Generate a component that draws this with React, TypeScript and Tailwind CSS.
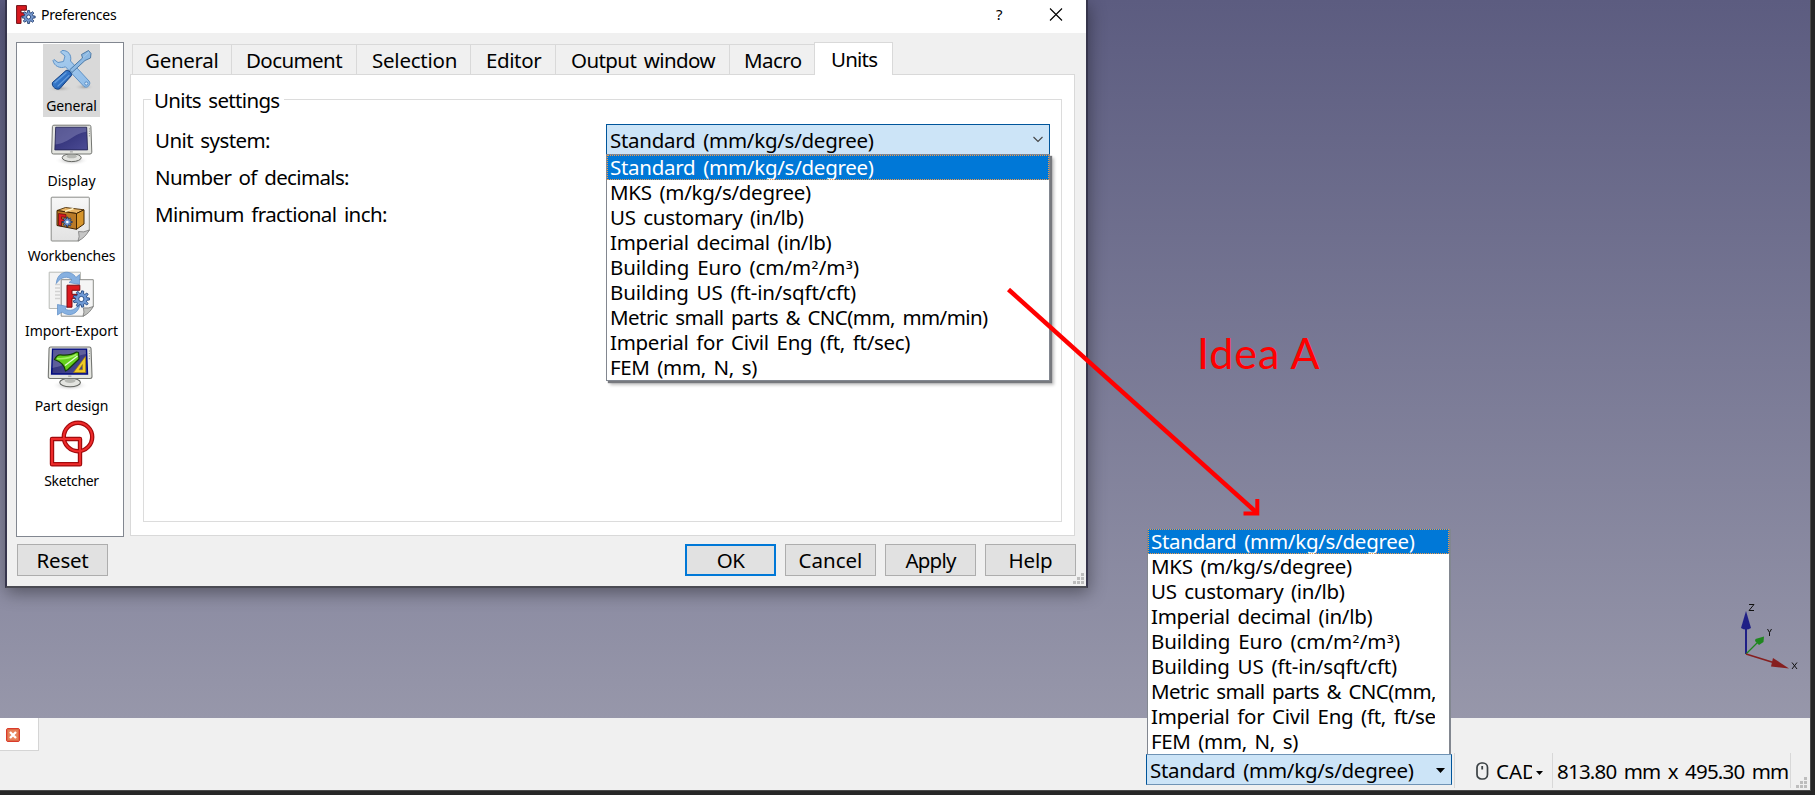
import React from 'react';

const TAHOMA = "font-['Noto_Sans',sans-serif] text-[20.5px] whitespace-pre text-black [word-spacing:2.700px]";

const unitSystems = [
  { label: 'Standard (mm/kg/s/degree)', cls: 'tracking-[-0.27px]' },
  { label: 'MKS (m/kg/s/degree)', cls: 'tracking-[-0.28px]' },
  { label: 'US customary (in/lb)', cls: 'tracking-[-0.31px]' },
  { label: 'Imperial decimal (in/lb)', cls: 'tracking-[-0.27px]' },
  { label: 'Building Euro (cm/m²/m³)', cls: 'tracking-[-0.06px]' },
  { label: 'Building US (ft-in/sqft/cft)', cls: 'tracking-[-0.13px]' },
  { label: 'Metric small parts & CNC(mm, mm/min)', cls: 'tracking-[-0.56px]' },
  { label: 'Imperial for Civil Eng (ft, ft/sec)', cls: 'tracking-[-0.29px]' },
  { label: 'FEM (mm, N, s)', cls: 'tracking-[-0.34px]' },
];

const tabs = [
  { label: 'General', cls: 'w-[99px] pl-[12px] tracking-[-0.28px]' },
  { label: 'Document', cls: 'w-[125px] pl-[14px] tracking-[-0.59px]' },
  { label: 'Selection', cls: 'w-[114px] pl-[15px] tracking-[-0.23px]' },
  { label: 'Editor', cls: 'w-[85px] pl-[15px] tracking-[-0.39px]' },
  { label: 'Output window', cls: 'w-[174px] pl-[15px] tracking-[-0.59px]' },
  { label: 'Macro', cls: 'w-[85px] pl-[14px] tracking-[-0.57px]' },
];

function gearPath(cx: number, cy: number, inner: number, outer: number, teeth: number) {
  const pts: string[] = [];
  const step = (Math.PI * 2) / teeth;
  for (let i = 0; i < teeth; i++) {
    const a = i * step;
    [[-0.3, inner], [-0.18, outer], [0.18, outer], [0.3, inner]].forEach(([k, r]) => {
      pts.push(`${(cx + Math.cos(a + k * step) * r).toFixed(2)},${(cy + Math.sin(a + k * step) * r).toFixed(2)}`);
    });
  }
  return `M${pts.join('L')}Z`;
}

function FreeCadIcon() {
  return (
    <svg width="20" height="20" viewBox="0 0 20 20">
      <path d="M.6.6h9.8v4.6H5v2.6h4v3.4H5v7.2H.6z" fill="#d8191f" stroke="#6e1015" strokeWidth="1" />
      <path d={gearPath(12.6, 12, 4.6, 6.6, 8)} fill="#7396cd" stroke="#26406f" strokeWidth=".9" />
      <circle cx="12.6" cy="12" r="2" fill="#fff" stroke="#26406f" strokeWidth=".9" />
    </svg>
  );
}

function ToolsIcon() {
  return (
    <svg width="48" height="48" viewBox="0 0 48 48">
      <defs>
        <linearGradient id="wrench" x1="0" y1="0" x2="1" y2="1">
          <stop offset="0" stopColor="#a9cdee" />
          <stop offset="1" stopColor="#8fbce8" />
        </linearGradient>
        <linearGradient id="handle" x1="0" y1="0" x2="1" y2="1">
          <stop offset="0" stopColor="#5b9be0" />
          <stop offset=".5" stopColor="#2f71c4" />
          <stop offset="1" stopColor="#1b4f9c" />
        </linearGradient>
        <radialGradient id="toolShade">
          <stop offset="0" stopColor="#a4a4a4" />
          <stop offset="1" stopColor="#d9d9d9" stopOpacity="0" />
        </radialGradient>
      </defs>
      <ellipse cx="12" cy="43.500" rx="13" ry="3.500" fill="url(#toolShade)" />
      <ellipse cx="36" cy="42" rx="10" ry="3.500" fill="url(#toolShade)" />
      <path d="M14 5.500C20 5 24 10 22.500 16L41 36C43.500 39 39.500 44 36 41.500L17.500 21.800C12 24 6 21 5 15.500L6 14.500L10 17.500L15.500 16.500L17 11L12.500 7.200Z" fill="url(#wrench)" stroke="#5f92c6" strokeWidth="1" strokeLinejoin="round" />
      <circle cx="38.300" cy="38.500" r="1.600" fill="#d5e5f5" stroke="#4c83bd" strokeWidth=".8" />
      <path d="M21.500 25L34.500 13L33.500 9.500L40.500 5.500L43 8.500L42.500 13L37 15.500L24 27.500Z" fill="#8db9e3" stroke="#41719f" strokeWidth=".9" strokeLinejoin="round" />
      <path d="M35 12.500L41 7" stroke="#a9cbe8" strokeWidth="1" />
      <path d="M18 25.500C20 24.500 24.500 28 23.500 30.500L12 43.500C9 46 3 41.500 4.500 37.500Z" fill="url(#handle)" stroke="#123f82" strokeWidth="1" />
      <path d="M7 37.500L18 28M10 41L21 30.500" stroke="#6fa8e6" strokeWidth="1.300" strokeLinecap="round" opacity=".75" />
    </svg>
  );
}

function Monitor({ part }: { part?: boolean }) {
  return (
    <svg width="48" height="48" viewBox="0 0 48 48">
      <defs>
        <linearGradient id="screen" x1="0" y1="0" x2="1" y2="1">
          <stop offset="0" stopColor="#28286e" />
          <stop offset="1" stopColor="#4c4c95" />
        </linearGradient>
        <radialGradient id="deskShade">
          <stop offset="0" stopColor="#999" />
          <stop offset="1" stopColor="#fff" stopOpacity="0" />
        </radialGradient>
      </defs>
      <g transform={part ? 'translate(-2.300 -3.200) scale(1.090)' : 'translate(.4 .4)'}>
        <ellipse cx="23.300" cy="40" rx="17" ry="5" fill="url(#deskShade)" />
        <path d="M19 33h8.500l1 4h-10.500z" fill="#9a9c97" />
        <ellipse cx="23.300" cy="37.300" rx="9.500" ry="3.900" fill="#e3e4e0" stroke="#666864" strokeWidth="1" />
        <ellipse cx="23.300" cy="35.800" rx="5" ry="2" fill="#b5b7b2" />
        <path d="M5.500 4.800h35.500q1.400 0 1.500 1.400l.9 25.600q0 1.800-1.800 1.800H5q-1.800 0-1.700-1.800l.7-25.600q.1-1.400 1.500-1.400z" fill="#e4e5e0" stroke="#747672" strokeWidth="1" />
        <path d="M7.300 6.800h31l.9 22.700H6.400z" fill="url(#screen)" stroke={part ? '#000a80' : '#20204c'} strokeWidth={part ? 1.4 : 0.8} />
        <path d="M7.700 7.300h30l.2 4C25 13 22 22 7.200 24z" fill="#7f7fb2" opacity=".55" />
        <path d="M41 8v9" stroke="#8b8d88" strokeWidth="1" strokeDasharray="1 1.300" />
        <path d="M21.500 31.500h3" stroke="#999" strokeWidth="1" />
      </g>
      {part && (
        <g>
          <path d="M7.500 14.500Q10 9.500 13.500 9.800Q23 11 29.500 7L31.500 7.500L32 14L21 24.500L18.500 26Q17.500 18 7.500 14.500Z" fill="#63cf1c" stroke="#143c05" strokeWidth="1.200" strokeLinejoin="round" />
          <path d="M10 13.500Q21 14.500 29.500 9.500" stroke="#a2f062" strokeWidth="1.500" fill="none" />
          <path d="M18 20.500L30.500 11" stroke="#e6f9d7" strokeWidth="1.300" />
          <path fillRule="evenodd" d="M26.500 27.500L38.500 11.500V27.500ZM32 24.700H35.500V19.500Z" fill="#f0cb27" stroke="#a67f00" strokeWidth=".6" />
        </g>
      )}
    </svg>
  );
}

function WorkbenchIcon() {
  return (
    <svg width="48" height="48" viewBox="0 0 48 48">
      <defs>
        <linearGradient id="paper" x1="0" y1="0" x2="0" y2="1">
          <stop offset="0" stopColor="#f7f7f7" />
          <stop offset="1" stopColor="#e2e2e2" />
        </linearGradient>
      </defs>
      <path d="M5 2.200h36.500q.8 0 .8.800v32.500L31.500 46H5q-.8 0-.8-.8V3q0-.8.800-.8z" fill="url(#paper)" stroke="#8a8c88" strokeWidth="1" />
      <path d="M31 46q2-4 .5-9.500q5 1.500 10.800-1.500Q38 43 31 46z" fill="#c6c6c6" stroke="#777" strokeWidth=".8" />
      <path d="M10 15.500L18.500 12.500L37 14.800L29.500 18.500Z" fill="#e9b668" stroke="#4a2b04" strokeWidth=".9" />
      <path d="M10 15.500L29.500 18.500V34.300L10 30.500Z" fill="#ba7a27" stroke="#3f2403" strokeWidth="1" />
      <path d="M29.500 18.500L37 14.800V29L29.500 34.300Z" fill="#d7962c" stroke="#3f2403" strokeWidth="1" />
      <path d="M18 16.500L26.500 13.500" stroke="#fff0c0" strokeWidth="1.800" />
      <path d="M11.500 18.500L19 19.600V22.400L14.500 21.800V24L18 24.500V27L14.500 26.500V31L11.500 30.300Z" fill="#dc1a20" stroke="#5a0b0d" strokeWidth=".7" />
      <path d={gearPath(20.300, 27, 3.300, 4.900, 8)} fill="#6f95d1" stroke="#14284e" strokeWidth=".8" />
      <circle cx="20.300" cy="27" r="1.300" fill="#fff" />
    </svg>
  );
}

function ImportExportIcon() {
  return (
    <svg width="48" height="48" viewBox="0 0 48 48">
      <path d="M2.200 2.200H33.500V38.500H2.200Z" fill="#f3f3f3" stroke="#b9bbb7" strokeWidth="1" />
      <path d="M8 14.500h5M8 18h5M8 21.500h5M8 25h5M8 28.500h5" stroke="#d2d2d2" strokeWidth="1.300" />
      <path d="M14.200 9.700H46.300V36.500L36.500 46.200H14.200Z" fill="#f5f5f5" stroke="#8a8c88" strokeWidth="1" />
      <path d="M36 46.200q1.700-4 .4-8.300q5 .8 9.900-1.400Q42.500 43.500 36 46.200z" fill="#bfc0bd" stroke="#777" strokeWidth=".8" />
      <path d="M9.300 13.500C10 4 17 1.200 22 2.500C26 3.500 28 5.500 28.800 7.500L32.500 4.500V14.500L22 12.500L25 10C21 5.500 14 6.500 9.300 13.500Z" fill="#86b0e0" stroke="#5c8cc6" strokeWidth=".7" />
      <path d="M33 35C31 43.500 24 46.500 17.500 43.500L15 42L10.500 45V34.500L20.500 36.500L18 39C23 41.500 28 40 31 35.500Z" fill="#86b0e0" stroke="#5c8cc6" strokeWidth=".7" />
      <path d="M20 15.200H32.800V20.300H25V24.300H30.500V28.300H25V37.200H20Z" fill="#dc1a20" stroke="#7c0a0e" strokeWidth="1" />
      <path d={gearPath(34.300, 29, 5.800, 8.200, 9)} fill="#6f9ad6" stroke="#1e457f" strokeWidth=".9" />
      <circle cx="34.300" cy="29" r="2.600" fill="#fff" stroke="#1e457f" strokeWidth=".9" />
    </svg>
  );
}

function SketcherIcon() {
  return (
    <svg width="48" height="48" viewBox="0 0 48 48" fill="none">
      <rect x="4" y="19" width="28" height="25.200" stroke="#a20a0c" strokeWidth="4.400" strokeLinejoin="round" />
      <circle cx="30" cy="17" r="14.200" stroke="#a20a0c" strokeWidth="4.400" />
      <rect x="4" y="19" width="28" height="25.200" stroke="#ee2a2a" strokeWidth="2" />
      <circle cx="30" cy="17" r="14.200" stroke="#ee2a2a" strokeWidth="2" />
    </svg>
  );
}

const categories = [
  { label: 'General', icon: <ToolsIcon />, cls: 'tracking-[-0.17px]', active: true },
  { label: 'Display', icon: <Monitor />, cls: 'tracking-[0.06px]' },
  { label: 'Workbenches', icon: <WorkbenchIcon />, cls: 'tracking-[-0.19px]' },
  { label: 'Import-Export', icon: <ImportExportIcon />, cls: 'tracking-[-0.03px]' },
  { label: 'Part design', icon: <Monitor part />, cls: 'tracking-[-0.12px]' },
  { label: 'Sketcher', icon: <SketcherIcon />, cls: 'tracking-[-0.34px]' },
];

function UnitLabel({ text }: { text: string }) {
  return (
    <>
      {text.split(/([²³])/).map((part, i) =>
        part === '²' || part === '³' ? (
          <span key={i} className="font-['DejaVu_Sans',sans-serif] text-[19px] leading-none">{part}</span>
        ) : (
          part
        ),
      )}
    </>
  );
}

function UnitList({ clip = '' }: { clip?: string }) {
  return (
    <ul>
      {unitSystems.map((u, i) => (
        <li
          key={u.label}
          className={
            i === 0
              ? 'h-[25px] bg-[#0078d7] outline-1 -outline-offset-1 outline-dotted outline-[#f09a4a]'
              : 'h-[25px]'
          }
        >
          <div className={`${TAHOMA} h-[25px] pl-[3px] leading-[25px] ${clip} ${u.cls} ${i === 0 ? 'text-white!' : ''}`}>
            <UnitLabel text={u.label} />
          </div>
        </li>
      ))}
    </ul>
  );
}

function PushButton({ label, cls, primary }: { label: string; cls: string; primary?: boolean }) {
  return (
    <button
      className={`${TAHOMA} ${cls} flex h-[32px] w-[91px] items-start justify-center bg-[#e1e1e1] leading-[33px] ${
        primary ? 'inset-ring-2 inset-ring-[#0078d7]' : 'inset-ring-1 inset-ring-[#adadad]'
      }`}
    >
      {label}
    </button>
  );
}

function SizeGrip() {
  return (
    <svg width="11" height="11" viewBox="0 0 11 11" fill="#bdbdbd" shapeRendering="crispEdges">
      <path d="M8 0h3v3H8zM4 4h3v3H4zM8 4h3v3H8zM0 8h3v3H0zM4 8h3v3H4zM8 8h3v3H8z" />
    </svg>
  );
}

function PreferencesDialog() {
  return (
    <section className="absolute top-0 left-[5px] flex h-[588px] w-[1083px] flex-col border-x-2 border-b-2 border-x-[#36354c] border-b-[#4b4b53] bg-[#f0f0f0] shadow-[1px_5px_16px_rgba(0,0,0,0.38)]">
      <header className="flex h-[33px] items-start bg-white pl-[9px]">
        <div className="pt-[5px]"><FreeCadIcon /></div>
        <h1 className="grow pl-[5px] font-['Noto_Sans',sans-serif] text-[14px] leading-[29px] tracking-[-0.22px] text-black">Preferences</h1>
        <span className="w-[10px] font-['Noto_Sans',sans-serif] text-[15px] leading-[28px] text-black">?</span>
        <svg className="mt-[8px] mr-[23px] ml-[43px]" width="14" height="13" viewBox="0 0 14 13" stroke="#000" strokeWidth="1.100">
          <path d="M1 .5l12 12M13 .5l-12 12" />
        </svg>
      </header>

      <div className="flex h-[504px] pt-[9px] pl-[9px]">
        <nav className="flex h-[495px] w-[108px] flex-col border border-[#828790] bg-white pt-px">
          {categories.map((c) => (
            <div key={c.label} className="flex h-[75px] flex-col items-center pl-[3px]">
              <div className={`flex h-[73px] min-w-[57px] flex-col items-center pt-px ${c.active ? 'bg-[#d9d9d9]' : ''}`}>
                {c.icon}
                <span className={`pt-[3px] font-['Noto_Sans',sans-serif] text-[14px] leading-[19px] whitespace-nowrap text-black ${c.cls}`}>{c.label}</span>
              </div>
            </div>
          ))}
        </nav>

        <div className="ml-[6px] flex w-[945px] flex-col">
          <div className="z-10 -mb-px flex h-[33px] items-end pl-[2px]">
            {tabs.map((t) => (
              <div key={t.label} className={`${TAHOMA} ${t.cls} h-[31px] border border-r-0 border-[#d9d9d9] bg-[#f0f0f0] leading-[30px]`}>
                {t.label}
              </div>
            ))}
            <div className={`${TAHOMA} h-[33px] w-[79px] border border-b-0 border-[#d9d9d9] bg-white pl-[16px] leading-[33px] tracking-[-0.78px]`}>Units</div>
          </div>
          <div className="h-[462px] border border-[#d9d9d9] bg-white px-[12px] pt-[10px]">
            <fieldset className="h-[437px] w-[919px] pt-[14px]">
              <div className="relative h-[423px] border border-[#dcdcdc]">
                <div className={`${TAHOMA} absolute -top-[15px] left-[7px] bg-white pr-[4px] pl-[3px] leading-[30px] tracking-[-0.66px]`}>Units settings</div>
                <div className="grid grid-cols-[451px_444px] pt-[24px] pl-[11px]">
                  <div>
                    <div className={`${TAHOMA} h-[37px] leading-[32px] tracking-[-0.6px]`}>Unit system:</div>
                    <div className={`${TAHOMA} h-[37px] leading-[32px] tracking-[-0.64px]`}>Number of decimals:</div>
                    <div className={`${TAHOMA} h-[37px] leading-[32px] tracking-[-0.58px]`}>Minimum fractional inch:</div>
                  </div>
                  <div className="relative">
                    <div className="flex h-[31px] items-start border border-[#00559b] bg-[#cce4f7] pr-[6px] pl-[3px]">
                      <span className={`${TAHOMA} grow leading-[30px] tracking-[-0.27px]`}>Standard (mm/kg/s/degree)</span>
                      <svg className="mt-[11px]" width="10" height="7" viewBox="0 0 10 7" fill="none" stroke="#444" strokeWidth="1.100">
                        <path d="M.5 1L5 5.500L9.500 1" />
                      </svg>
                    </div>
                    <div className="absolute top-[30px] left-0 h-[227px] w-[444px] border border-[#828790] bg-white shadow-[2px_2px_1px_#77797e,4px_4px_3px_rgba(0,0,0,0.25)]">
                      <UnitList />
                    </div>
                  </div>
                </div>
              </div>
            </fieldset>
          </div>
        </div>
      </div>

      <footer className="flex pt-[7px] pl-[10px]">
        <PushButton label="Reset" cls="tracking-[-0.26px]" />
        <div className="ml-auto flex gap-[9px] pr-[10px]">
          <PushButton label="OK" cls="tracking-[-0.7px]" primary />
          <PushButton label="Cancel" cls="" />
          <PushButton label="Apply" cls="tracking-[-0.79px]" />
          <PushButton label="Help" cls="tracking-[-0.1px]" />
        </div>
      </footer>
      <div className="absolute right-[2px] bottom-[2px]"><SizeGrip /></div>
    </section>
  );
}

function AxisCross() {
  return (
    <svg className="absolute top-[600px] left-[1735px]" width="70" height="75" viewBox="0 0 70 75" fill="none">
      <path d="M11 54V20" stroke="#1f1f86" strokeWidth="2" />
      <path d="M11 11L16 28Q11 31 6 28Z" fill="#1f1f86" />
      <path d="M11 54L24 41" stroke="#1f861f" strokeWidth="1.300" />
      <path d="M29 36.500L20.500 39L20 41L24 45L28.500 42Z" fill="#1f861f" />
      <path d="M11 54L40 63" stroke="#861f1f" strokeWidth="1.800" />
      <path d="M54 68.500L38 58L36 66.500Z" fill="#861f1f" />
      <g stroke="#111" strokeWidth="1">
        <path d="M14 4.500h5L14 10.500h5" />
        <path d="M32.500 29L34.500 32.500L36.500 29M34.500 32.500V36" />
        <path d="M57 62.500L62 69M62 62.500L57 69" />
      </g>
    </svg>
  );
}

function StatusBar() {
  return (
    <footer className="flex h-[72px] w-[1810px] items-start bg-[#f0f0f0]">
      <div className="flex h-[33px] w-[39px] border-r border-b border-[#d5d5d5] bg-white pt-[10px] pl-[6px]">
        <svg width="14" height="14" viewBox="0 0 14 14">
          <rect x=".5" y=".5" width="13" height="13" rx="1.500" fill="#e8845c" stroke="#da3a2b" />
          <rect x="1.700" y="1.700" width="10.600" height="10.600" fill="none" stroke="#d9623f" strokeWidth=".8" />
          <path d="M4 4l6 6M10 4l-6 6" stroke="#fff" strokeWidth="2.300" />
        </svg>
      </div>
      <div className="ml-auto flex pt-[35px]">
        <div className="relative h-[35px] w-[308px] pt-px">
          <div className="flex h-[31px] w-[306px] border border-[#00559b] border-y-[#6f93b5] bg-[#cce4f7] pl-[3px]">
            <span className={`${TAHOMA} grow leading-[30px] tracking-[-0.27px]`}>Standard (mm/kg/s/degree)</span>
            <svg className="mt-[13px] mr-[6px]" width="9" height="5" viewBox="0 0 9 5"><path d="M0 0h9L4.500 5z" /></svg>
          </div>
          <div className="absolute bottom-[34px] left-px h-[225px] w-[304px] border-x border-r-2 border-[#828790] bg-white">
            <UnitList clip="mr-[14px] overflow-x-clip" />
          </div>
        </div>
        <div className="flex h-[35px] w-[98px] border-l border-[#d8d8d8] pl-[21px]">
          <svg className="mt-[9px]" width="13" height="18" viewBox="0 0 13 18" fill="none">
            <rect x="1" y="1" width="10.500" height="16" rx="4.500" stroke="#3b4144" strokeWidth="1.700" />
            <path d="M6.200 4v3.500" stroke="#3b4144" strokeWidth="1.800" />
          </svg>
          <div className={`${TAHOMA} ml-[7px] w-[36px] overflow-x-clip leading-[37px]`}>CAD</div>
          <svg className="mt-[18px] ml-[4px]" width="7" height="4" viewBox="0 0 7 4"><path d="M0 0h7L3.500 4z" /></svg>
        </div>
        <div className={`${TAHOMA} h-[35px] w-[239px] border-x border-[#d8d8d8] pl-[4px] leading-[37px] tracking-[-0.78px]`}>813.80 mm x 495.30 mm</div>
        <div className="pt-[24px] pr-[3px] pl-[5px]"><SizeGrip /></div>
      </div>
    </footer>
  );
}

export default function App() {
  return (
    <main className="relative h-[795px] w-[1815px] overflow-hidden bg-[#272727]">
      <div className="flex h-[791px] w-[1811px] flex-col border-r border-b border-[#4a4a4a] bg-[#2b2b2b]">
        <div className="h-[718px] w-[1810px] bg-linear-to-b from-[#5c5c80] to-[#9797aa]" />
        <StatusBar />
      </div>
      <AxisCross />
      <PreferencesDialog />
      <p className="absolute top-[327px] left-[1197px] font-['Lato',sans-serif] text-[43px] leading-[52px] tracking-[0.9px] whitespace-pre text-[#ff0000]">Idea A</p>
      <svg className="absolute top-[280px] left-[1000px]" width="270" height="245" viewBox="0 0 270 245" fill="none" stroke="#ff0000" strokeWidth="4.500">
        <path d="M8.500 9.500L256 232" />
        <path d="M257.300 219V233.500H243.500" strokeWidth="4" />
      </svg>
    </main>
  );
}
